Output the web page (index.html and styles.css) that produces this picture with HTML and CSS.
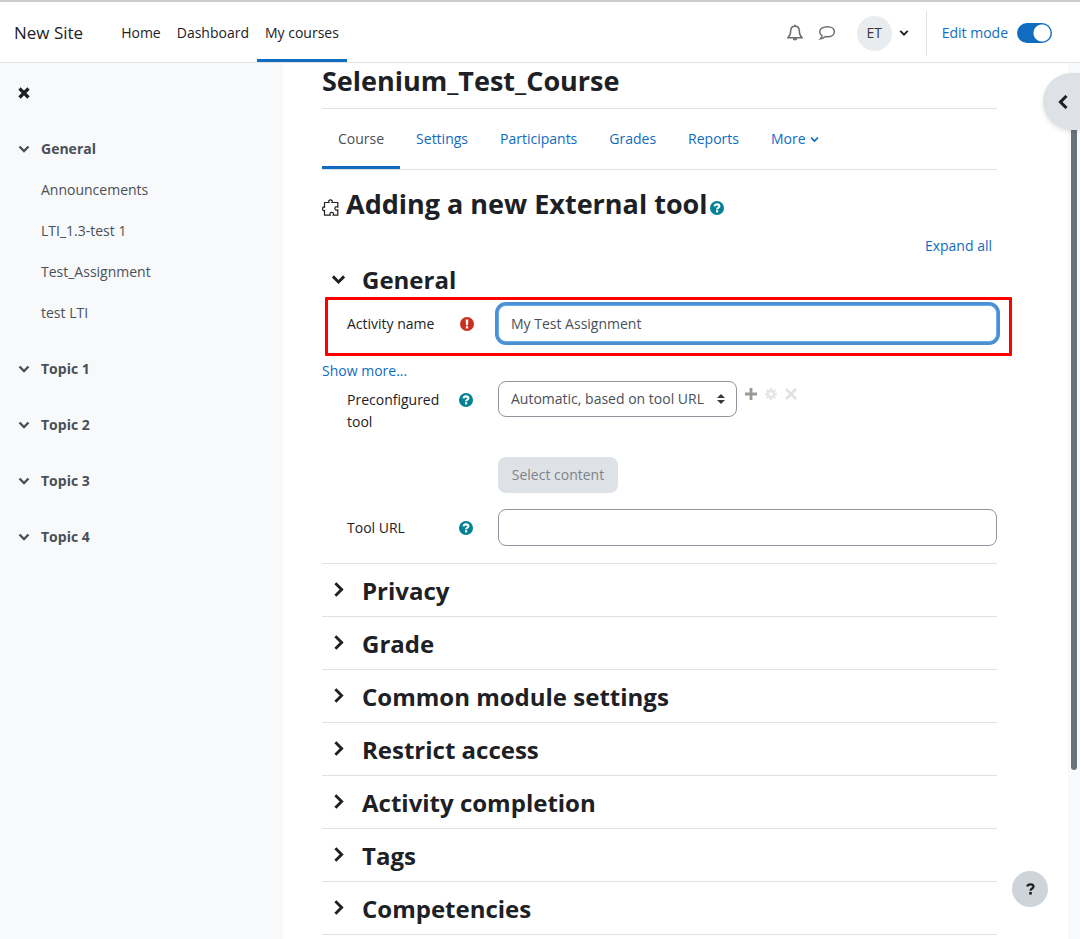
FILE: index.html
```html
<!DOCTYPE html>
<html lang="en">
<head>
<meta charset="utf-8">
<title>Adding a new External tool</title>
<link rel="stylesheet" href="styles.css">
</head>
<body>
<svg class="sprite" aria-hidden="true">
  <symbol id="down" viewBox="0 0 12 12"><path d="M1.5 3.5 6 8l4.5-4.5" fill="none" stroke="currentColor" stroke-width="2.3"/></symbol>
  <symbol id="right" viewBox="0 0 12 12"><path d="M3.5 1 8.500 6l-5 5" fill="none" stroke="currentColor" stroke-width="2.3"/></symbol>
  <symbol id="left" viewBox="0 0 12 12"><path d="M9 .8 3.800 6 9 11.200" fill="none" stroke="currentColor" stroke-width="2.600"/></symbol>
  <symbol id="cross" viewBox="0 0 12 12"><path d="m1.500 1.500 9 9m0-9-9 9" fill="none" stroke="currentColor" stroke-width="3.200"/></symbol>
  <symbol id="help" viewBox="0 0 14 14"><circle cx="7" cy="7" r="7" fill="currentColor"/><path d="M4.500 5.400C4.700 4 5.700 3.400 7 3.400c1.400 0 2.400.7 2.400 1.900C9.400 6.800 7.100 6.700 7.100 8.500" fill="none" stroke="#fff" stroke-width="2.100"/><path d="M6 9.300h2.200v2.100H6z" fill="#fff"/></symbol>
</svg>
<header class="navbar">
  <a class="brand" href="#">New Site</a>
  <nav class="primary" aria-label="Site">
    <a href="#">Home</a>
    <a href="#">Dashboard</a>
    <a class="active" href="#">My courses</a>
  </nav>
  <div class="usernav">
    <button class="bare bell" aria-label="Notifications"><svg width="16" height="18" viewBox="0 0 16 18"><path d="M8 2.200c3 0 4.300 2.200 4.300 4.600 0 3.800 1 5.500 2.700 6.900H1c1.700-1.400 2.700-3.100 2.700-6.900C3.700 4.400 5 2.200 8 2.200Z" fill="none" stroke="currentColor" stroke-width="1.500"/><path d="M7.200.8h1.600V3H7.200zM5.700 14.200h4.600a2.300 2.300 0 0 1-4.600 0Z" fill="currentColor"/></svg></button>
    <button class="bare chat" aria-label="Messages"><svg width="18" height="16" viewBox="0 0 18 16"><path d="M9.400 1.700c4 0 7 2.100 7 5s-3 5-7 5c-.7 0-1.400-.1-2-.2-1.300 1.200-2.900 2-4.800 2.200.9-.8 1.400-1.700 1.500-2.900C2.800 9.900 1.700 8.400 1.700 6.700c0-2.900 3.300-5 7.700-5Z" fill="none" stroke="currentColor" stroke-width="1.500"/></svg></button>
    <button class="bare user" aria-label="User menu"><span class="avatar">ET</span><svg width="10" height="10"><use href="#down"/></svg></button>
    <div class="editmode">
      <label for="edit">Edit mode</label>
      <input class="switch" type="checkbox" role="switch" id="edit" checked>
    </div>
  </div>
</header>
<div class="page">
  <aside class="sidebar">
    <button class="bare close" aria-label="Close course index"><svg width="12" height="12"><use href="#cross"/></svg></button>
    <nav class="index" aria-label="Course index">
      <section>
        <a class="topic" href="#"><svg width="12" height="12"><use href="#down"/></svg>General</a>
        <a class="item" href="#">Announcements</a>
        <a class="item" href="#">LTI_1.3-test 1</a>
        <a class="item" href="#">Test_Assignment</a>
        <a class="item" href="#">test LTI</a>
      </section>
      <section><a class="topic" href="#"><svg width="12" height="12"><use href="#down"/></svg>Topic 1</a></section>
      <section><a class="topic" href="#"><svg width="12" height="12"><use href="#down"/></svg>Topic 2</a></section>
      <section><a class="topic" href="#"><svg width="12" height="12"><use href="#down"/></svg>Topic 3</a></section>
      <section><a class="topic" href="#"><svg width="12" height="12"><use href="#down"/></svg>Topic 4</a></section>
    </nav>
  </aside>
  <main class="content">
    <h1>Selenium_Test_Course</h1>
    <nav class="tabs" aria-label="Course">
      <a class="active" href="#">Course</a>
      <a href="#">Settings</a>
      <a href="#">Participants</a>
      <a href="#">Grades</a>
      <a href="#">Reports</a>
      <a href="#">More <svg width="9" height="9"><use href="#down"/></svg></a>
    </nav>
    <h2><svg class="puzzle" width="17" height="18" viewBox="0 0 17 18"><path d="M2.500 3.500H7C6.200 2 7 .8 8.500.8S10.800 2 10 3.500h5.800v4.600c-1.500-.8-2.900-.2-2.900 1.300s1.400 2.300 2.900 1.500v5.300h-4.600c.8-1.600.2-2.900-1.500-2.900s-2.300 1.300-1.500 2.900H2.500v-4.700c-1.300.6-1.900-.4-1.900-1.700s.7-2.300 1.900-1.600z" fill="#fff" stroke="currentColor" stroke-width="1.200"/></svg>Adding a new External tool<button class="bare help" aria-label="Help with External tool"><svg width="14" height="14"><use href="#help"/></svg></button></h2>
    <div class="expand"><a href="#">Expand all</a></div>
    <form>
      <h3 class="open"><button class="bare toggle" type="button"><svg width="15" height="15"><use href="#down"/></svg>General</button></h3>
      <div class="row marked">
        <label for="name">Activity name</label>
        <span class="mark required" role="img" aria-label="Required"><svg width="14" height="14" viewBox="0 0 14 14"><circle cx="7" cy="7" r="7" fill="currentColor"/><path d="M5.700 2.500h2.600L8 8.300H6zM5.900 9.200h2.200v2.200H5.900z" fill="#fff"/></svg></span>
        <input class="field focused" type="text" id="name" value="My Test Assignment">
      </div>
      <a class="more" href="#">Show more...</a>
      <div class="row tool">
        <label for="tool">Preconfigured tool</label>
        <button class="bare mark help" type="button" aria-label="Help with Preconfigured tool"><svg width="14" height="14"><use href="#help"/></svg></button>
        <div class="picker">
          <span class="selectwrap"><select class="field" id="tool"><option>Automatic, based on tool URL</option></select><svg class="carets" width="8" height="10" viewBox="0 0 8 10"><path d="M4 0 8 4H0zM4 10 0 6h8z" fill="currentColor"/></svg></span>
          <span class="actions">
            <button class="bare" type="button" aria-label="Add"><svg width="12" height="12" viewBox="0 0 12 12"><path d="M6 0v12M0 6h12" stroke="#999" stroke-width="2.800"/></svg></button>
            <button class="bare" type="button" aria-label="Edit" disabled><svg width="12" height="12" viewBox="0 0 12 12"><path d="M6 0v12M0 6h12M1.800 1.800l8.400 8.400m0-8.400-8.400 8.400" stroke="#e6e6e6" stroke-width="2.400"/><circle cx="6" cy="6" r="3" fill="#fff" stroke="#e6e6e6" stroke-width="2.400"/></svg></button>
            <button class="bare" type="button" aria-label="Delete" disabled><svg width="12" height="12" viewBox="0 0 12 12"><path d="m1 1 10 10m0-10L1 11" stroke="#e2e2e2" stroke-width="2.600"/></svg></button>
          </span>
        </div>
      </div>
      <div class="row select-row"><button class="select-content" type="button" disabled>Select content</button></div>
      <div class="row">
        <label for="url">Tool URL</label>
        <button class="bare mark help" type="button" aria-label="Help with Tool URL"><svg width="14" height="14"><use href="#help"/></svg></button>
        <input class="field" type="text" id="url">
      </div>
      <div class="sections">
        <h3><button class="bare toggle" type="button"><svg width="15" height="15"><use href="#right"/></svg>Privacy</button></h3>
        <h3><button class="bare toggle" type="button"><svg width="15" height="15"><use href="#right"/></svg>Grade</button></h3>
        <h3><button class="bare toggle" type="button"><svg width="15" height="15"><use href="#right"/></svg>Common module settings</button></h3>
        <h3><button class="bare toggle" type="button"><svg width="15" height="15"><use href="#right"/></svg>Restrict access</button></h3>
        <h3><button class="bare toggle" type="button"><svg width="15" height="15"><use href="#right"/></svg>Activity completion</button></h3>
        <h3><button class="bare toggle" type="button"><svg width="15" height="15"><use href="#right"/></svg>Tags</button></h3>
        <h3><button class="bare toggle" type="button"><svg width="15" height="15"><use href="#right"/></svg>Competencies</button></h3>
      </div>
    </form>
  </main>
  <div class="gutter"><div class="thumb"></div></div>
  <button class="bare drawer" aria-label="Open block drawer"><svg width="14" height="14"><use href="#left"/></svg></button>
</div>
<button class="bare footer-help" aria-label="Help"><svg width="9" height="12" viewBox="0 0 9 12"><path d="M1.200 3.500C1.600 2 2.700 1.300 4.400 1.300c1.900 0 3.100.8 3.100 2.300C7.500 5.600 4.500 5.400 4.500 7.800" fill="none" stroke="currentColor" stroke-width="2.300"/><path d="M3.200 9h2.600v2.600H3.200z" fill="currentColor"/></svg></button>
</body>
</html>
```
FILE: styles.css
```css
* { box-sizing: border-box; }
body {
  margin: 0;
  min-height: 100vh;
  display: flex;
  flex-direction: column;
  background: #fff;
  color: #1d2125;
  font: 14px/22px "Open Sans", "Noto Sans", sans-serif;
}
a { color: #0f6cbf; text-decoration: none; }
h1, h2, h3 { margin: 0; font-weight: 700; }
svg { flex: none; }
.sprite { position: absolute; width: 0; height: 0; }
.bare { padding: 0; border: 0; background: none; color: inherit; font: inherit; }

.navbar {
  display: flex;
  height: 63px;
  padding: 0 28px 0 14px;
  border-top: 2px solid #ccc;
  border-bottom: 1px solid #dee2e6;
}
.brand { align-self: center; padding-top: 2px; margin-right: 30px; color: #1d2125; font-size: 17px; }
.primary { display: flex; }
.primary a {
  display: flex;
  align-items: center;
  padding: 5px 8px 0;
  border-bottom: 3px solid transparent;
  color: #1d2125;
}
.primary a.active { border-bottom-color: #0f6cbf; }
.usernav { display: flex; align-items: center; padding-top: 2px; margin-left: auto; color: #6a6f73; }
.bell, .chat { display: flex; margin-right: 15px; }
.user { display: flex; align-items: center; gap: 7px; margin-left: 6px; color: #1d2125; }
.avatar {
  display: grid;
  place-items: center;
  width: 35px;
  height: 35px;
  border-radius: 50%;
  background: #e9ecef;
  color: #343a40;
}
.editmode {
  display: flex;
  align-items: center;
  gap: 9px;
  height: 45px;
  margin-left: 17px;
  padding-left: 15px;
  border-left: 1px solid #dee2e6;
  color: #0f6cbf;
}
.switch {
  appearance: none;
  width: 35px;
  height: 20px;
  margin: 0;
  border-radius: 10px;
  background: radial-gradient(circle at 25px 10px, #fff 8px, #0f6cbf 9px);
}

.page { position: relative; display: flex; flex: 1; }
.sidebar { width: 283px; flex: none; padding: 24px 18px; background: #f8f9fa; }
.close { display: flex; margin-bottom: 29px; }
.index { display: grid; gap: 15px; }
.topic, .item { display: flex; align-items: center; height: 41px; color: #495057; }
.topic { gap: 11px; font-weight: 700; }
.item { padding-left: 23px; }

.content { flex: 1; min-width: 0; padding: 0 71px 0 39px; }
h1 { height: 46px; border-bottom: 1px solid #dee2e6; font-size: 27px; line-height: 36px; }
.tabs { display: flex; height: 61px; border-bottom: 1px solid #dee2e6; }
.tabs a { display: flex; align-items: center; gap: 4px; padding: 3px 16px 0; border-bottom: 3px solid transparent; }
.tabs a.active { border-bottom-color: #0f6cbf; color: #495057; }
h2 { display: flex; align-items: center; height: 68px; font-size: 27px; line-height: 36px; }
.puzzle { margin: 7px 7px 0 0; color: #222; }
.help { display: flex; color: #008196; }
h2 .help { margin: 7px 0 0 2px; }
.expand { padding-right: 5px; line-height: 16px; text-align: right; }
.toggle { display: flex; align-items: center; gap: 16px; width: 100%; padding-left: 9px; text-align: left; }
h3 { font-size: 24px; line-height: 52px; }
.open { line-height: 51px; }

.row {
  display: grid;
  grid-template-columns: 95px 50px minmax(0, 1fr);
  gap: 0 3px;
  align-items: start;
  padding-left: 25px;
  line-height: 22px;
}
.row label { padding-top: 8px; }
.mark { display: flex; padding-top: 12px; margin-left: 14px; }
.required { color: #ca3120; margin-left: 15px; }
.marked { position: relative; }
.marked::after {
  content: "";
  position: absolute;
  inset: -8px -15px -14px 3px;
  border: 3px solid #f00;
  border-radius: 1px;
  pointer-events: none;
}
.field {
  width: 100%;
  height: 37px;
  padding: 0 12px;
  border: 1px solid #8f959e;
  border-radius: 8px;
  background: #fff;
  color: #495057;
  font: inherit;
}
.focused { border-color: #6aaeed; box-shadow: 0 0 0 3px #4a90d2; outline: 0; }
.more { display: block; margin: 18px 0 -1px; }
.picker { display: flex; align-items: flex-start; gap: 8px; }
.selectwrap { position: relative; width: 239px; }
.selectwrap select { height: 36px; appearance: none; }
.carets { position: absolute; right: 12px; top: 13px; color: #343a40; }
.actions { display: flex; gap: 8px; padding-top: 7px; }
.actions .bare { display: flex; }
.tool { min-height: 76px; }
.select-row { margin-bottom: 16px; }
.select-content {
  grid-column: 3;
  width: 120px;
  height: 36px;
  padding: 0;
  border: 0;
  border-radius: 8px;
  background: #dee2e6;
  color: #7f8386;
  font: inherit;
}
.sections { margin-top: 17px; border-top: 1px solid #dee2e6; }
.sections h3 { border-bottom: 1px solid #dee2e6; }
.sections .toggle { padding-top: 2px; line-height: 50px; }
.sections .toggle svg { margin-bottom: 4px; }

.gutter { width: 12px; flex: none; padding: 10px 3px 169px; background: #f8f9fa; }
.thumb { height: 100%; border-radius: 3px; background: #6a737b; }
.drawer {
  position: absolute;
  top: 10px;
  right: 0;
  display: flex;
  align-items: center;
  width: 37px;
  height: 57px;
  padding-left: 13px;
  border-radius: 29px 0 0 29px;
  background: #dee2e6;
  box-shadow: 0 2px 4px rgba(0, 0, 0, .1);
}
.footer-help {
  position: fixed;
  right: 32px;
  bottom: 32px;
  display: grid;
  place-items: center;
  width: 36px;
  height: 36px;
  border-radius: 50%;
  background: #ced4da;
}
```
